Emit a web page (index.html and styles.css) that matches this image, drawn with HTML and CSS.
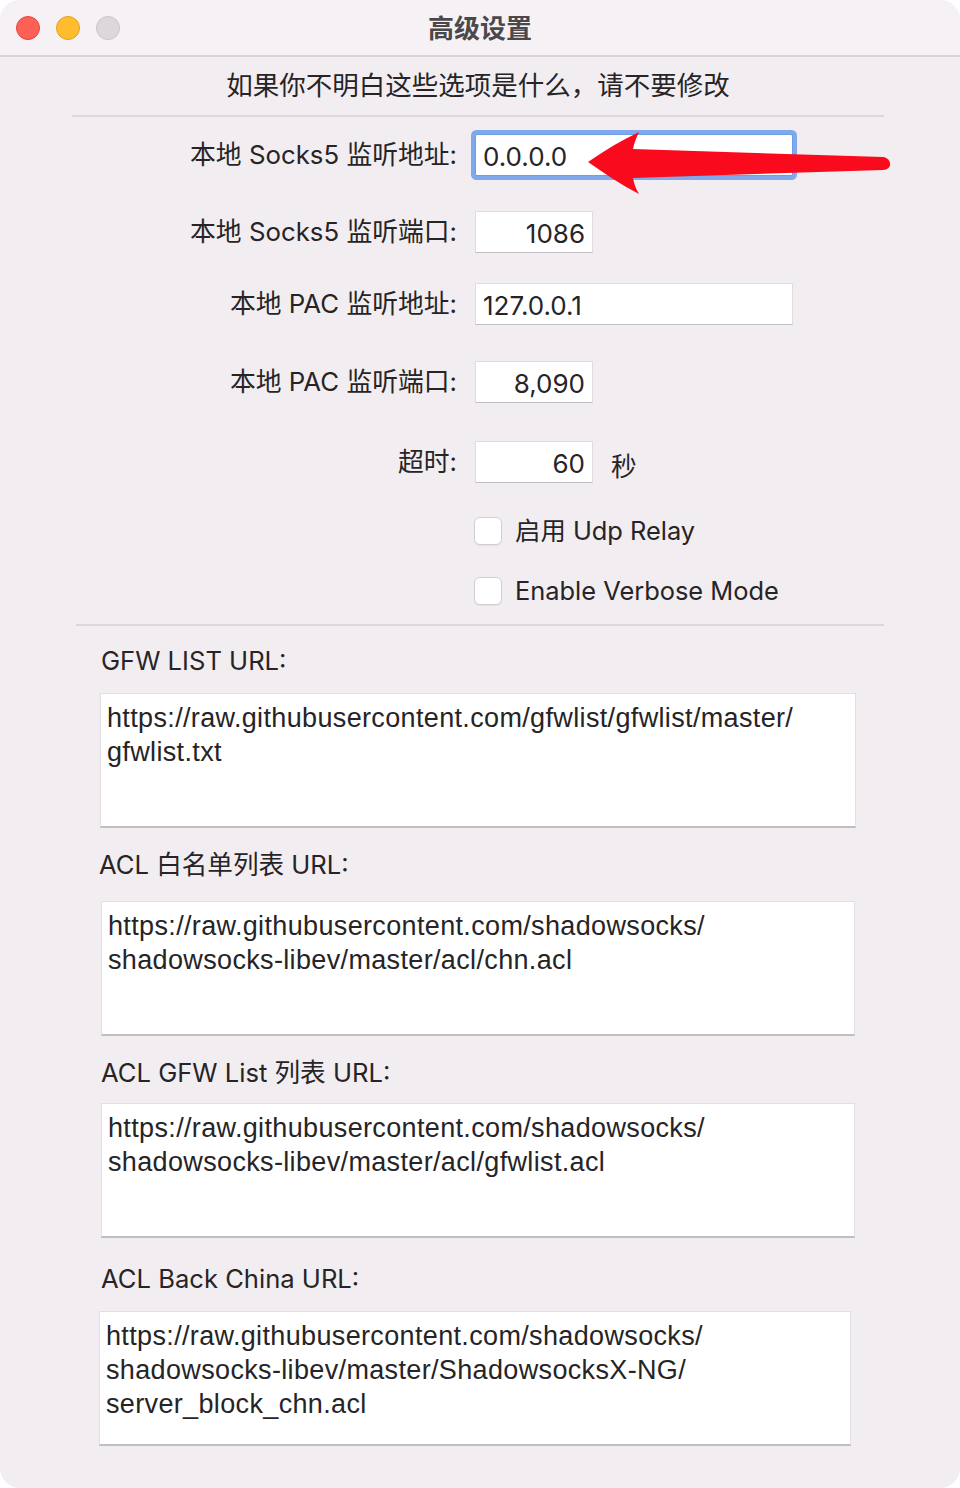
FILE: index.html
```html
<!DOCTYPE html>
<html lang="zh-CN">
<head>
<meta charset="utf-8">
<title>高级设置</title>
<link rel="stylesheet" href="styles.css">
</head>
<body>
<div class="window">
  <header class="titlebar">
    <div class="lights">
      <span class="light red"></span>
      <span class="light yellow"></span>
      <span class="light gray"></span>
    </div>
    <div class="title">高级设置</div>
  </header>
  <main class="content">
    <p class="notice">如果你不明白这些选项是什么，请不要修改</p>
    <hr class="sep sep-top">
    <div class="form">
      <div class="row r1">
        <label class="label">本地 Socks5 监听地址:</label>
        <div class="field wide focused"><span class="val">0.0.0.0</span></div>
      </div>
      <div class="row r2">
        <label class="label">本地 Socks5 监听端口:</label>
        <div class="field short num"><span class="val">1086</span></div>
      </div>
      <div class="row r3">
        <label class="label">本地 PAC 监听地址:</label>
        <div class="field wide"><span class="val">127.0.0.1</span></div>
      </div>
      <div class="row r4">
        <label class="label">本地 PAC 监听端口:</label>
        <div class="field short num"><span class="val">8,090</span></div>
      </div>
      <div class="row r5">
        <label class="label">超时:</label>
        <div class="field short num"><span class="val">60</span></div>
        <span class="unit">秒</span>
      </div>
      <div class="row r6">
        <span class="label"></span>
        <div class="check"><span class="box"></span><span class="ctext">启用 Udp Relay</span></div>
      </div>
      <div class="row r7">
        <span class="label"></span>
        <div class="check"><span class="box"></span><span class="ctext">Enable Verbose Mode</span></div>
      </div>
    </div>
    <hr class="sep sep-mid">
    <section class="urls">
      <div class="url u1">
        <div class="ulabel">GFW LIST URL:</div>
        <div class="area">https://raw.githubusercontent.com/gfwlist/gfwlist/master/<br>gfwlist.txt</div>
      </div>
      <div class="url u2">
        <div class="ulabel">ACL 白名单列表 URL:</div>
        <div class="area">https://raw.githubusercontent.com/shadowsocks/<br>shadowsocks-libev/master/acl/chn.acl</div>
      </div>
      <div class="url u3">
        <div class="ulabel">ACL GFW List 列表 URL:</div>
        <div class="area">https://raw.githubusercontent.com/shadowsocks/<br>shadowsocks-libev/master/acl/gfwlist.acl</div>
      </div>
      <div class="url u4">
        <div class="ulabel">ACL Back China URL:</div>
        <div class="area">https://raw.githubusercontent.com/shadowsocks/<br>shadowsocks-libev/master/ShadowsocksX-NG/<br>server_block_chn.acl</div>
      </div>
    </section>
  </main>
  <svg class="arrow" width="320" height="80" viewBox="580 125 320 80" aria-hidden="true">
    <path d="M588,162 C605,150 622,140 639,132 C636,138 634,144 633,149 L883,157 C892,158 893,170 883,170 L633,178 C634,184 636,189 639,194 C622,185 605,174 588,162 Z" fill="#f90b1d"/>
  </svg>
</div>
</body>
</html>
```
FILE: styles.css
```css
* { box-sizing: border-box; }
html, body { margin: 0; padding: 0; background: #ffffff; }
body {
  font-family: "Inter", "Noto Sans CJK SC", sans-serif;
  color: #262426;
  width: 960px;
  height: 1488px;
}
.window {
  position: relative;
  width: 960px;
  height: 1488px;
  background: #f2edf1;
  border-radius: 20px;
  overflow: hidden;
}
.titlebar {
  height: 57px;
  background: #f6f1f5;
  border-bottom: 2px solid #d8d3d7;
  display: flex;
  align-items: center;
  position: relative;
}
.lights {
  display: flex;
  gap: 16px;
  padding-left: 16px;
}
.light {
  width: 24px;
  height: 24px;
  border-radius: 50%;
  display: block;
}
.red { background: #fe5f57; border: 1px solid #e2463f; }
.yellow { background: #febc2e; border: 1px solid #dea123; }
.gray { background: #dcd7db; border: 1px solid #c8c3c7; }
.title {
  position: absolute;
  left: 0; right: 0;
  top: 0; bottom: 2px;
  display: flex;
  align-items: center;
  justify-content: center;
  font-family: "Noto Sans CJK SC", sans-serif;
  font-weight: 700;
  font-size: 26px;
  color: #4b484b;
}
.content { padding: 0; }
.notice {
  margin: 0;
  padding-top: 10px;
  height: 58px;
  line-height: 34px;
  text-align: center;
  font-size: 26.5px;
  font-family: "Noto Sans CJK SC", sans-serif;
  padding-right: 4px;
}
.sep {
  border: 0;
  height: 2px;
  background: #dcd7db;
  margin: 0;
}
.sep-top { margin-left: 72px; margin-right: 76px; }
.sep-mid { margin-left: 76px; margin-right: 76px; margin-top: 12px; }
.form { display: flex; flex-direction: column; }
.row {
  display: grid;
  grid-template-columns: 457px auto auto;
  justify-content: start;
  column-gap: 18px;
  align-items: center;
  height: 42px;
}
.r1 { margin-top: 17px; }
.r2 { margin-top: 35px; }
.r3 { margin-top: 30px; }
.r4 { margin-top: 36px; }
.r5 { margin-top: 38px; }
.r6 { margin-top: 27px; }
.r7 { margin-top: 18px; }
.label {
  text-align: right;
  font-size: 25.8px;
  line-height: 34px;
  white-space: nowrap;
}
.field {
  height: 42px;
  background: #ffffff;
  border: 1px solid #e0dbdf;
  border-bottom-color: #c4bfc3;
  display: flex;
  align-items: center;
  padding: 0 7px;
  font-size: 26px;
}
.field .val { line-height: 34px; padding-top: 3px; }
.wide { width: 318px; }
.short { width: 118px; }
.num { justify-content: flex-end; }
.focused {
  border: 1px solid #6f9de3;
  box-shadow: 0 0 0 4px #7eaaed;
  border-radius: 2px;
}
.unit {
  font-size: 25.6px;
  font-family: "Noto Sans CJK SC", sans-serif;
  padding-top: 4px;
}
.check {
  display: flex;
  align-items: center;
  gap: 13px;
  margin-left: -1px;
}
.box {
  width: 28px;
  height: 28px;
  border-radius: 6px;
  background: #ffffff;
  border: 1px solid #d2cdd1;
  box-shadow: 0 1px 1px rgba(0,0,0,0.06);
}
.ctext { font-size: 25.4px; line-height: 34px; }
.urls { display: flex; flex-direction: column; }
.ulabel {
  font-size: 25.6px;
  line-height: 34px;
  height: 34px;
  padding-left: 101px;
}
.area {
  background: #ffffff;
  height: 135px;
  border: 1px solid #e3dee2;
  border-bottom: 2px solid #c2bdc1;
  padding: 7px 6px;
  font-family: "Liberation Sans", sans-serif;
  font-size: 27px;
  letter-spacing: 0.35px;
  line-height: 34px;
  color: #262426;
}
.u1 { margin-top: 18px; }
.u1 .area { margin: 15px 104px 0 100px; }
.u2 { margin-top: 20px; }
.u2 .ulabel { padding-left: 99px; }
.u2 .area { margin: 19px 105px 0 101px; }
.u3 { margin-top: 20px; }
.u3 .area { margin: 13px 105px 0 101px; }
.u4 { margin-top: 24px; }
.u4 .area { margin: 15px 109px 0 99px; }
.arrow {
  position: absolute;
  left: 580px;
  top: 125px;
}
```
